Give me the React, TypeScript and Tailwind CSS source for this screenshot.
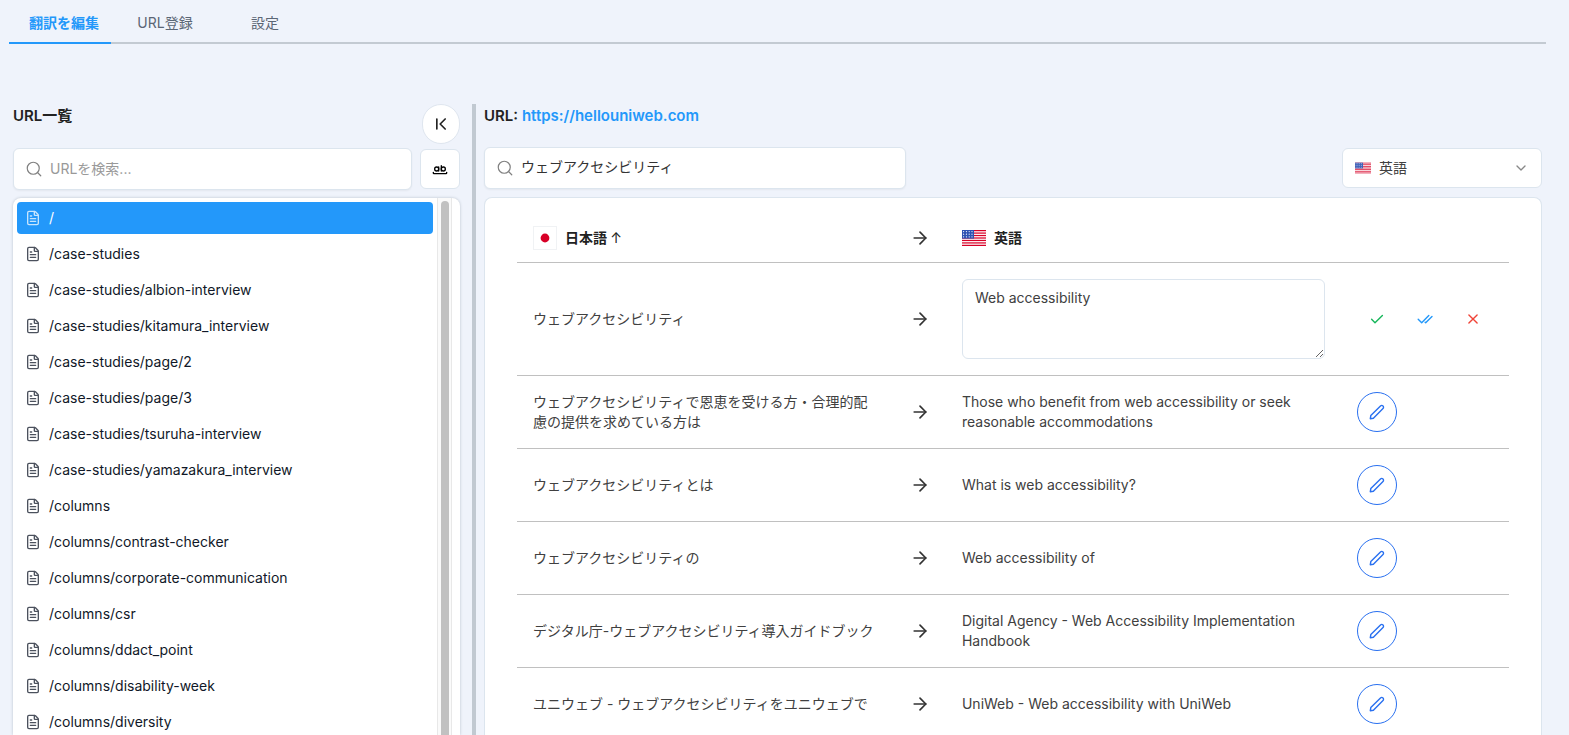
import { useState } from 'react'
import type { ReactNode } from 'react'
import { ArrowRight, ChevronDown, ChevronFirst, FileText, Search, WholeWord } from 'lucide-react'

const paths = [
  '/',
  '/case-studies',
  '/case-studies/albion-interview',
  '/case-studies/kitamura_interview',
  '/case-studies/page/2',
  '/case-studies/page/3',
  '/case-studies/tsuruha-interview',
  '/case-studies/yamazakura_interview',
  '/columns',
  '/columns/contrast-checker',
  '/columns/corporate-communication',
  '/columns/csr',
  '/columns/ddact_point',
  '/columns/disability-week',
  '/columns/diversity',
]

const translations = [
  {
    source: 'ウェブアクセシビリティで恩恵を受ける方・合理的配慮の提供を求めている方は',
    target: 'Those who benefit from web accessibility or seek reasonable accommodations',
  },
  { source: 'ウェブアクセシビリティとは', target: 'What is web accessibility?' },
  { source: 'ウェブアクセシビリティの', target: 'Web accessibility of' },
  {
    source: 'デジタル庁-ウェブアクセシビリティ導入ガイドブック',
    target: 'Digital Agency - Web Accessibility Implementation Handbook',
  },
  {
    source: 'ユニウェブ - ウェブアクセシビリティをユニウェブで',
    target: 'UniWeb - Web accessibility with UniWeb',
  },
]

function FlagUS({ className }: { className: string }) {
  return (
    <svg viewBox="0 0 24 16" className={className} aria-hidden="true">
      <rect width="24" height="16" fill="#fff" />
      {[0, 1, 2, 3, 4, 5, 6].map((i) => (
        <rect key={i} y={(i * 32) / 13} width="24" height={16 / 13} fill="#d80027" />
      ))}
      <rect width="12" height="8.62" fill="#2e52b2" />
      {[1.6, 4.2, 6.8].map((y) =>
        [1.6, 4.4, 7.2, 10].map((x) => (
          <circle key={`${x}-${y}`} cx={x} cy={y} r="0.6" fill="#fff" />
        )),
      )}
    </svg>
  )
}

function FlagJP() {
  return (
    <svg viewBox="0 0 24 24" className="size-6" aria-hidden="true">
      <rect x="0.5" y="0.5" width="23" height="23" fill="#fff" stroke="#f0f2f4" />
      <circle cx="12" cy="12" r="4.4" fill="#d80027" />
    </svg>
  )
}

function PencilIcon() {
  return (
    <svg
      viewBox="0 0 16 16"
      className="size-4"
      fill="none"
      stroke="currentColor"
      strokeWidth="1.4"
      strokeLinecap="round"
      strokeLinejoin="round"
      aria-hidden="true"
    >
      <path d="M1.3 14.7l.5-3.1L11.5 2a1.7 1.7 0 0 1 2.5 2.5L4.4 14.2z" />
    </svg>
  )
}

function ActionIcon({ label, className, children }: { label: string; className: string; children: ReactNode }) {
  return (
    <button type="button" aria-label={label} className={`flex size-10 items-center justify-center ${className}`}>
      <svg
        viewBox="0 0 16 16"
        className="size-4"
        fill="none"
        stroke="currentColor"
        strokeWidth="1.4"
        strokeLinecap="round"
        strokeLinejoin="round"
        aria-hidden="true"
      >
        {children}
      </svg>
    </button>
  )
}

function RowArrow() {
  return <ArrowRight className="mx-auto size-5 text-[#333]" strokeWidth={2} aria-label="→" />
}

export default function App() {
  const [query, setQuery] = useState('ウェブアクセシビリティ')
  const [draft, setDraft] = useState('Web accessibility')
  const [selected, setSelected] = useState('/')

  return (
    <div className="flex h-screen flex-col overflow-hidden bg-[#eff3fb] font-['Inter','Noto_Sans_CJK_JP',sans-serif] text-sm text-[#404040]">
      <nav className="mr-[23px] ml-[9px] flex h-11 shrink-0 border-b-2 border-[#c3cad2] text-[#5b6675]">
        <button
          type="button"
          className="-mb-0.5 h-11 w-[102px] border-b-2 border-[#2398fa] pt-1 pl-2 font-bold text-[#2398fa]"
        >
          翻訳を編集
        </button>
        <button type="button" className="w-[108px] pt-1">
          URL登録
        </button>
        <button type="button" className="w-[92px] pt-1">
          設定
        </button>
      </nav>

      <main className="mt-15 mr-[27px] flex min-h-0 flex-1 pl-[13px]">
        <section className="flex w-[447px] shrink-0 flex-col">
          <div className="flex h-11 items-start justify-between">
            <h2 className="text-[15px] leading-6 font-semibold text-[#222]">URL一覧</h2>
            <button
              type="button"
              aria-label="一覧を閉じる"
              className="flex h-10 w-[38px] items-center justify-center rounded-full border border-[#dfe6ef] bg-white text-[#222]"
            >
              <ChevronFirst className="size-5" strokeWidth={2} />
            </button>
          </div>
          <div className="flex items-center gap-2">
            <label className="flex h-[42px] flex-1 items-center gap-[7px] rounded-md border border-[#dce5ee] bg-white px-[11px] shadow-xs">
              <Search className="size-[18px] shrink-0 text-[#808080]" strokeWidth={1.6} />
              <input
                type="search"
                aria-label="URLを検索"
                placeholder="URLを検索..."
                className="w-full min-w-0 bg-transparent outline-none placeholder:text-[#999]"
              />
            </label>
            <button
              type="button"
              aria-label="完全一致"
              className="flex size-10 items-center justify-center rounded-md border border-[#dce5ee] bg-white text-black"
            >
              <WholeWord className="size-4" strokeWidth={2} />
            </button>
          </div>
          <div className="mt-2 flex min-h-0 flex-1 overflow-hidden rounded-t-lg bg-white shadow-[0_0_3px_#b8c0cc]">
            <ul className="flex flex-1 flex-col gap-1 overflow-hidden p-1">
              {paths.map((path) => (
                <li key={path} className="shrink-0">
                  <button
                    type="button"
                    onClick={() => setSelected(path)}
                    className={
                      path === selected
                        ? 'flex h-8 w-full items-center gap-2 rounded bg-[#2398fa] px-2 text-left text-white'
                        : 'flex h-8 w-full items-center gap-2 rounded px-2 text-left text-[#101828]'
                    }
                  >
                    <FileText className="size-4 opacity-75" strokeWidth={2} />
                    {path}
                  </button>
                </li>
              ))}
            </ul>
            <div className="flex w-[15px] justify-center border-x border-[#e8e8e8] bg-[#fafafa] pt-[3px]">
              <div className="w-2 rounded-t-full bg-[#c1c1c1]" />
            </div>
            <div className="w-2" />
          </div>
        </section>

        <div className="mx-3 w-1 shrink-0 bg-[#c1c9d1]" />

        <section className="-ml-1 flex min-w-0 flex-1 flex-col">
          <h2 className="h-[43px] shrink-0 text-[15px] leading-6 font-semibold text-[#222]">
            URL:{' '}
            <a href="https://hellouniweb.com" className="text-[#2398fa]">
              https://hellouniweb.com
            </a>
          </h2>
          <div className="flex items-center justify-between">
            <label className="flex h-[42px] w-[422px] items-center gap-[7px] rounded-md border border-[#dce5ee] bg-white px-[11px] shadow-xs">
              <Search className="size-[18px] shrink-0 text-[#808080]" strokeWidth={1.6} />
              <input
                type="text"
                aria-label="翻訳を検索"
                value={query}
                onChange={(e) => setQuery(e.target.value)}
                className="w-full min-w-0 bg-transparent pb-0.5 text-[#333] outline-none"
              />
            </label>
            <div className="relative flex h-10 w-[200px] items-center rounded-md border border-[#dce5ee] bg-white">
              <FlagUS className="absolute left-3 h-3 w-4 opacity-90" />
              <select aria-label="言語" className="h-full w-full appearance-none bg-transparent pl-9 outline-none">
                <option>英語</option>
              </select>
              <ChevronDown className="pointer-events-none absolute right-3 size-4 text-[#888]" />
            </div>
          </div>

          <div className="mt-2 min-h-0 flex-1 overflow-hidden rounded-t-lg border border-b-0 border-[#dce5ee] bg-white px-8 pt-4">
            <table className="w-full table-fixed border-collapse">
              <colgroup>
                <col className="w-[38%]" />
                <col className="w-[52px]" />
                <col />
                <col className="w-[168px]" />
              </colgroup>
              <thead>
                <tr className="h-12 border-b border-[#c0c0c0] text-left text-[#222]">
                  <th className="pl-4">
                    <span className="flex items-center gap-2 font-bold">
                      <FlagJP />
                      <span>
                        日本語 <span className="font-normal">↑</span>
                      </span>
                    </span>
                  </th>
                  <th>
                    <RowArrow />
                  </th>
                  <th className="pl-4">
                    <span className="flex items-center gap-2 font-bold">
                      <FlagUS className="h-4 w-6" />
                      英語
                    </span>
                  </th>
                  <th />
                </tr>
              </thead>
              <tbody>
                <tr className="h-[113px] border-b border-[#c0c0c0]">
                  <td className="px-4">ウェブアクセシビリティ</td>
                  <td>
                    <RowArrow />
                  </td>
                  <td className="px-4">
                    <textarea
                      aria-label="英語の翻訳"
                      value={draft}
                      onChange={(e) => setDraft(e.target.value)}
                      className="block h-20 w-full rounded-md border border-[#dce5ee] px-3 py-2 leading-5 outline-none"
                    />
                  </td>
                  <td className="pl-4">
                    <div className="flex gap-2">
                      <ActionIcon label="保存" className="text-[#16b65a]">
                        <path d="M2.6 8.3l3.4 3.4L13.4 4.4" />
                      </ActionIcon>
                      <ActionIcon label="すべて保存" className="text-[#2398fa]">
                        <path d="M1.2 8.2l3.5 3.5L11.8 4.4M8.1 11.2l.6.5L15 5.4" />
                      </ActionIcon>
                      <ActionIcon label="キャンセル" className="text-[#f04438]">
                        <path d="M3.9 3.9l8.2 8.2M12.1 3.9l-8.2 8.2" />
                      </ActionIcon>
                    </div>
                  </td>
                </tr>
                {translations.map((row) => (
                  <tr key={row.source} className="h-[73px] border-b border-[#c0c0c0]">
                    <td className="px-4 leading-5">{row.source}</td>
                    <td>
                      <RowArrow />
                    </td>
                    <td className="px-4 leading-5">{row.target}</td>
                    <td className="pl-4">
                      <button
                        type="button"
                        aria-label="編集"
                        className="flex size-10 items-center justify-center rounded-full border border-[#2970f0] text-[#2970f0]"
                      >
                        <PencilIcon />
                      </button>
                    </td>
                  </tr>
                ))}
              </tbody>
            </table>
          </div>
        </section>
      </main>
    </div>
  )
}
